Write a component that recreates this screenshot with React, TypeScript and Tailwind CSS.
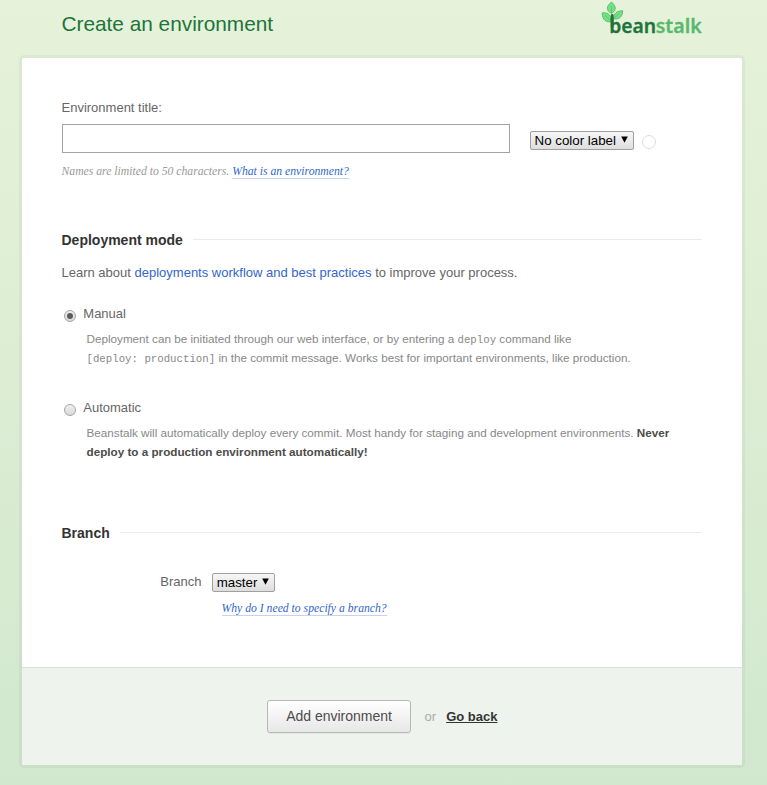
import type { ReactNode } from "react";

function Logo() {
  return (
    <svg width="102" height="44" viewBox="0 0 102 44" className="block overflow-visible">
      <path d="M10.500 13.500C5 10.500 5 6.500 10.500 2 15.500 6.500 15.500 10.500 10.500 13.500Z" fill="#74e083" stroke="#4fbd68" strokeWidth=".9" />
      <path d="M1.200 12.900C7 12.200 10.500 15 10.500 21.600 5.500 22.700 1.200 20 1.200 12.900Z" fill="#74e083" stroke="#4fbd68" strokeWidth=".9" />
      <path d="M21.700 10.800C16 10.500 12.300 13.500 12.600 18.900 18 19.700 21.500 17 21.700 10.800Z" fill="#74e083" stroke="#4fbd68" strokeWidth=".9" />
      <path d="M10.500 6V13M4 15.500L9.500 20.500M19 13L13 18" stroke="#55c06d" strokeWidth=".7" fill="none" />
      <path d="M11.200 15.500V27" stroke="#1f733d" strokeWidth="2.800" strokeLinecap="round" />
      <text x="8.200" y="32.500" fontSize="19" fontWeight="600" fontFamily="'Noto Sans', sans-serif" fill="#1f733d" stroke="#1f733d" strokeWidth=".3" strokeLinejoin="round" textLength="47" lengthAdjust="spacingAndGlyphs">bean</text>
      <text x="54.700" y="32.500" fontSize="19" fontWeight="600" fontFamily="'Noto Sans', sans-serif" fill="#58b96c" stroke="#58b96c" strokeWidth=".3" strokeLinejoin="round" textLength="46" lengthAdjust="spacingAndGlyphs">stalk</text>
    </svg>
  );
}

function Select({ children, width }: { children: ReactNode; width: string }) {
  return (
    <button className={`flex h-[19px] items-center justify-between rounded-[2px] border border-[#a0a0a0] bg-linear-to-b from-[#f6f6f6] to-[#dedede] pr-[5px] pl-[4px] text-[13.333px] leading-[17px] text-black ${width}`}>
      <span>{children}</span>
      <svg width="7" height="7" viewBox="0 0 7 7" className="mb-[2px]"><path d="M.2.500h6.600L3.500 6.800Z" fill="#000" /></svg>
    </button>
  );
}

function Heading({ children }: { children: ReactNode }) {
  return (
    <div className="flex h-5 items-center gap-[10px]">
      <h2 className="text-[14px] leading-5 font-bold text-[#333]">{children}</h2>
      <div className="mb-px h-px flex-1 bg-[#ebebeb]" />
    </div>
  );
}

function Radio({ checked }: { checked?: boolean }) {
  return (
    <span className="mt-[6px] flex size-3 items-center justify-center rounded-full border border-[#a5a5a5] bg-linear-to-b from-[#f0f0f0] to-[#d9d9d9]">
      {checked && <span className="size-[6px] rounded-full bg-[#5c5c5c]" />}
    </span>
  );
}

function Code({ children }: { children: ReactNode }) {
  return <code className="font-['Liberation_Mono',monospace] text-[10.730px] leading-[0]">{children}</code>;
}

function Option({ title, checked, children }: { title: string; checked?: boolean; children: ReactNode }) {
  return (
    <div className="pl-[2px]">
      <label className="flex h-5 gap-[7.800px] text-[13px] leading-5"><Radio checked={checked} />{title}</label>
      <p className="mt-[5px] ml-[23px] w-[600px] text-[11.700px] leading-[19px] text-[#888]">{children}</p>
    </div>
  );
}

function HelpLink({ children }: { children: ReactNode }) {
  return <a className="inline-block border-b border-[#c5d3f2] leading-[13px] text-[#3366cc]">{children}</a>;
}

export default function App() {
  return (
    <div className="h-[785px] w-full bg-linear-to-b from-[#e6f2da] to-[#d1e8ce] pl-[18.500px] font-['Liberation_Sans',Arial,sans-serif] text-[13px] text-[#666]">
      <header className="flex h-[55px] w-[684.500px] justify-between pl-[43px]">
        <h1 className="mt-[12px] text-[20.800px] leading-6 text-[#20743c]">Create an environment</h1>
        <Logo />
      </header>
      <main className="w-[726px] rounded-[5px] bg-black/[0.035] p-[3px]">
        <div className="h-[707px] overflow-hidden rounded-[2px] bg-white">
          <div className="h-[609px] px-10 pt-10">
            <label className="block leading-5">Environment title:</label>
            <div className="mt-[6px] flex">
              <input className="h-[29px] w-[448px] border border-[#a3a3a3] bg-white" />
              <div className="mt-[7px] ml-5 flex"><Select width="w-[104px]">No color label</Select></div>
              <span className="mt-[11px] ml-[8px] size-[14px] rounded-full border border-[#ddd]" />
            </div>
            <p className="mt-[9px] h-5 font-['Liberation_Serif',serif] text-[11.700px] leading-[20px] italic text-[#999]">Names are limited to 50 characters. <HelpLink>What is an environment?</HelpLink></p>
            <div className="mt-[48px]"><Heading>Deployment mode</Heading></div>
            <p className="mt-[13px] leading-5">Learn about <a className="text-[#3366cc]">deployments workflow and best practices</a> to improve your process.</p>
            <div className="mt-[21px] flex flex-col gap-[31px]">
              <Option title="Manual" checked>
                Deployment can be initiated through our web interface, or by entering a <Code>deploy</Code> command like<br />
                <Code>[deploy: production]</Code> in the commit message. Works best for important environments, like production.
              </Option>
              <Option title="Automatic">
                Beanstalk will automatically deploy every commit. Most handy for staging and development environments. <b className="text-[#4c4c4c]">Never<br />deploy to a production environment automatically!</b>
              </Option>
            </div>
            <div className="mt-[62px]"><Heading>Branch</Heading></div>
            <div className="mt-[30px] flex pl-[98.800px]">
              <label className="w-[51.400px] leading-[18px]">Branch</label>
              <Select width="w-[63px]">master</Select>
            </div>
            <p className="mt-[9px] ml-[160px] font-['Liberation_Serif',serif] text-[11.700px] leading-[15px] italic"><HelpLink>Why do I need to specify a branch?</HelpLink></p>
          </div>
          <footer className="flex h-[98px] items-center justify-center border-t border-[#d3e5da] bg-[#eef3ed] pl-px">
            <button className="h-[33px] w-[144px] rounded-[3px] border border-[#b8b8b8] bg-linear-to-b from-white to-[#e7e7e7] pl-px text-[14px] text-[#4c4c4c] shadow-[0_1px_1px_#0000000d]">Add environment</button>
            <span className="ml-[14px] text-[#aaa]">or</span>
            <a className="ml-[10px] font-bold text-[#333] underline">Go back</a>
          </footer>
        </div>
      </main>
    </div>
  );
}
